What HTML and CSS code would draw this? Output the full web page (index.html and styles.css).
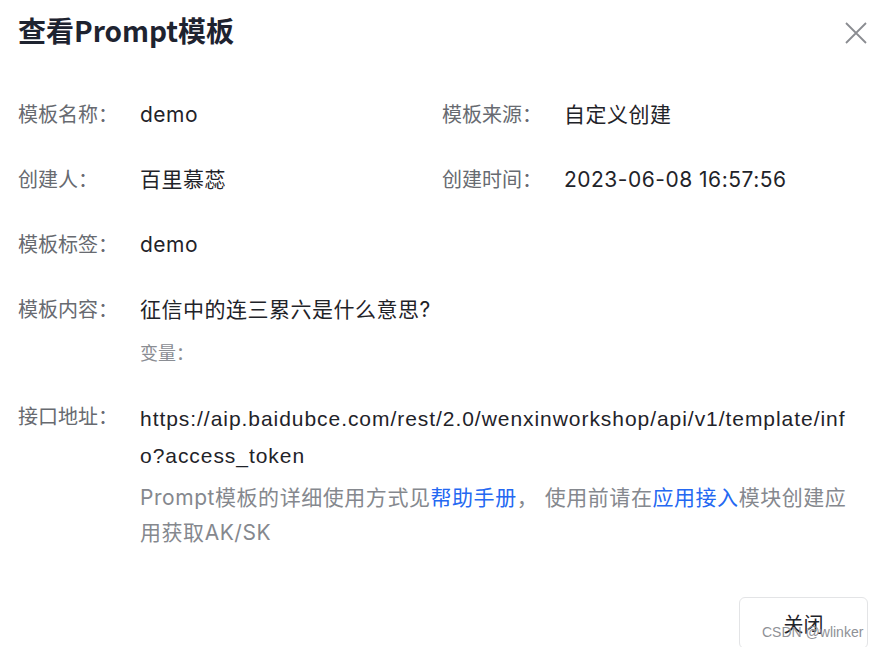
FILE: index.html
```html
<!DOCTYPE html>
<html lang="zh-CN">
<head>
  <meta charset="UTF-8" />
  <title>查看Prompt模板</title>
  <link rel="stylesheet" href="styles.css">
</head>
<body>
  <div class="dialog">
    <div class="dialog-header">
      <h2 class="dialog-title">查看Prompt模板</h2>
      <svg class="close-icon" width="22" height="22" viewBox="0 0 22 22">
        <path d="M1 1 L21 21 M21 1 L1 21" stroke="#8a8c91" stroke-width="1.8" fill="none" />
      </svg>
    </div>

    <div class="dialog-body">
      <div class="row two-col">
        <div class="field">
          <span class="label">模板名称：</span>
          <span class="value">demo</span>
        </div>
        <div class="field">
          <span class="label">模板来源：</span>
          <span class="value">自定义创建</span>
        </div>
      </div>

      <div class="row two-col">
        <div class="field">
          <span class="label">创建人：</span>
          <span class="value">百里慕蕊</span>
        </div>
        <div class="field">
          <span class="label">创建时间：</span>
          <span class="value">2023-06-08 16:57:56</span>
        </div>
      </div>

      <div class="row">
        <div class="field">
          <span class="label">模板标签：</span>
          <span class="value">demo</span>
        </div>
      </div>

      <div class="row">
        <div class="field">
          <span class="label">模板内容：</span>
          <div class="value">
            <div>征信中的连三累六是什么意思?</div>
            <div class="vars">变量：</div>
          </div>
        </div>
      </div>

      <div class="row">
        <div class="field">
          <span class="label">接口地址：</span>
          <div class="value">
            <div class="url">https://aip.baidubce.com/rest/2.0/wenxinworkshop/api/v1/template/info?access_token</div>
            <div class="hint">Prompt模板的详细使用方式见<a href="#">帮助手册</a>， 使用前请在<a href="#">应用接入</a>模块创建应用获取AK/SK</div>
          </div>
        </div>
      </div>
    </div>

    <div class="dialog-footer">
      <button class="btn">关闭</button>
    </div>
  </div>
  <div class="watermark">CSDN @wlinker</div>
</body>
</html>
```

FILE: styles.css
```css
body {
  margin: 0;
  padding: 0;
  background: #fff;
  font-family: Inter, "Noto Sans CJK SC", sans-serif;
  color: #1f2329;
  overflow: hidden;
}
.dialog {
  width: 877px;
  height: 647px;
  padding: 0 18px;
  box-sizing: border-box;
  position: relative;
}
.dialog-header {
  display: flex;
  justify-content: space-between;
  align-items: center;
  height: 62px;
}
.dialog-title {
  margin: -3px 0 0;
  font-family: "Noto Sans CJK SC", sans-serif;
  font-size: 28px;
  font-weight: bold;
  color: #1e2330;
  line-height: 40px;
}
.close-icon {
  margin-right: -8px;
  margin-top: 4px;
}
.dialog-body {
  padding-top: 38px;
  font-size: 21px;
}
.row {
  margin-bottom: 35px;
}
.two-col {
  display: grid;
  grid-template-columns: 424px 1fr;
}
.field {
  display: flex;
  line-height: 30px;
}
.label {
  width: 122px;
  flex: none;
  color: #676a70;
  font-size: 20px;
}
.value {
  flex: 1;
  color: #1f2329;
  letter-spacing: 0.5px;
}
.vars {
  font-family: "Noto Sans CJK SC", sans-serif;
  font-size: 18px;
  letter-spacing: 0;
  color: #8a8d93;
  margin-top: 12px;
}
.url {
  font-family: "Liberation Sans", "Noto Sans CJK SC", sans-serif;
  letter-spacing: 0.95px;
  line-height: 37px;
  word-break: break-all;
  margin-top: -2px;
}
.hint {
  color: #85888e;
  font-size: 21px;
  letter-spacing: 0.55px;
  line-height: 35px;
  margin-top: 6px;
}
.hint a {
  color: #2468f2;
  text-decoration: none;
}
.dialog-footer {
  display: flex;
  justify-content: flex-end;
  margin-top: 47px;
}
.btn {
  width: 129px;
  height: 52px;
  margin-right: -9px;
  background: #fff;
  border: 1px solid #e3e4e6;
  border-radius: 6px;
  font-family: "Noto Sans CJK SC", sans-serif;
  font-size: 20px;
  color: #1f2329;
}
.watermark {
  position: absolute;
  left: 762px;
  top: 624px;
  font-family: "Liberation Sans", sans-serif;
  font-size: 14px;
  color: #8f9196;
}
```
